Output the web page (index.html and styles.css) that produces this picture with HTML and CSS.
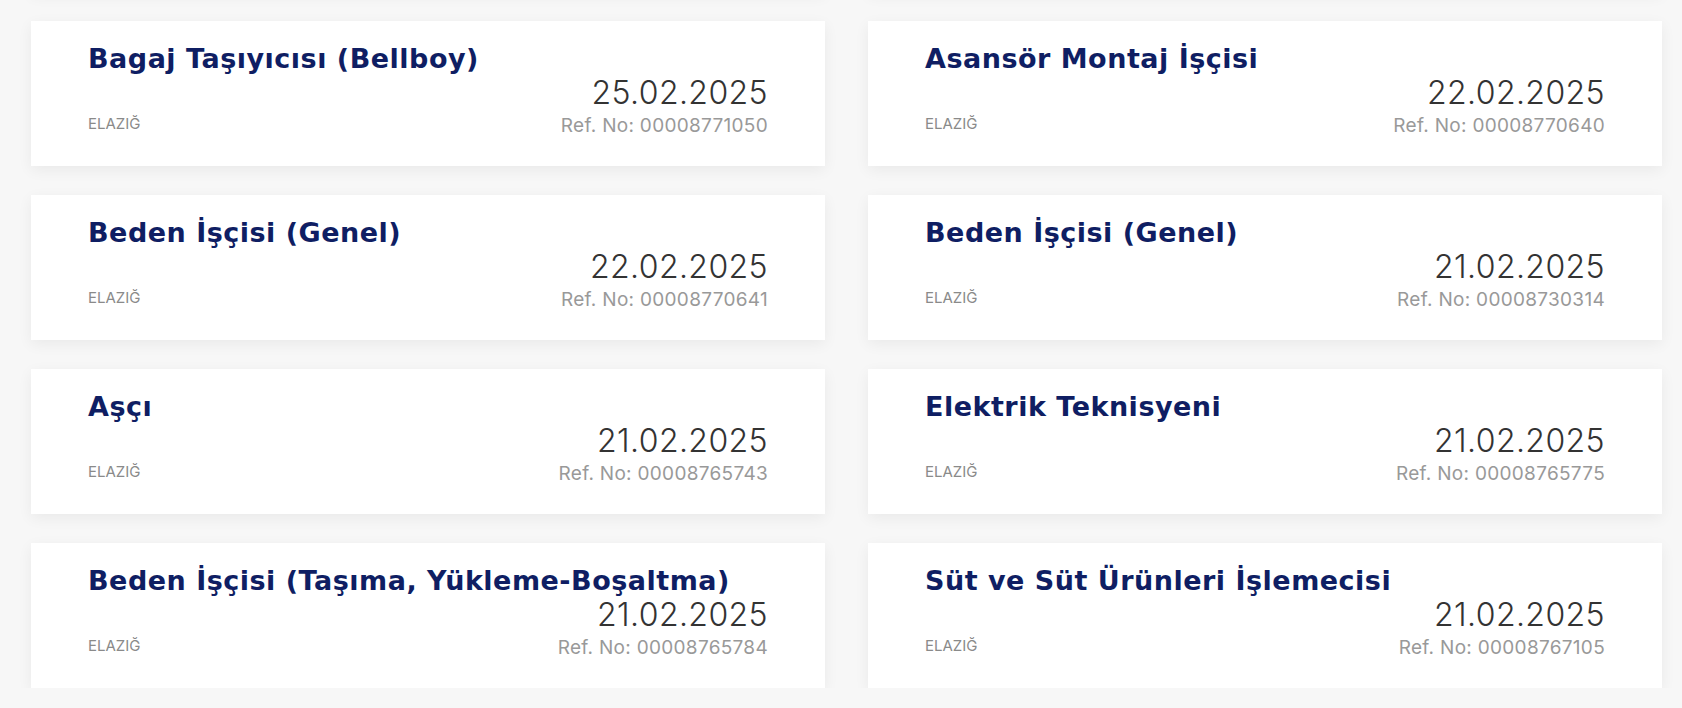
FILE: index.html
```html
<!DOCTYPE html>
<html lang="tr">
<head>
    <meta charset="UTF-8">
    <meta name="viewport" content="width=device-width, initial-scale=1.0">
    <title>İş İlanları - Elazığ</title>
    <link rel="stylesheet" href="styles.css">
</head>
<body>
    <div class="job-list">
        <!-- row scrolled above the fold, only its bottom shadow shows -->
        <div class="job-card job-card--prev" aria-hidden="true"></div>
        <div class="job-card job-card--prev" aria-hidden="true"></div>

        <a class="job-card" href="#">
            <h3 class="job-title">Bagaj Taşıyıcısı (Bellboy)</h3>
            <div class="job-info">
                <span class="job-city">ELAZIĞ</span>
                <div class="job-meta">
                    <div class="job-date">25.02.2025</div>
                    <div class="job-ref">Ref. No: 00008771050</div>
                </div>
            </div>
        </a>
        <a class="job-card" href="#">
            <h3 class="job-title">Asansör Montaj İşçisi</h3>
            <div class="job-info">
                <span class="job-city">ELAZIĞ</span>
                <div class="job-meta">
                    <div class="job-date">22.02.2025</div>
                    <div class="job-ref">Ref. No: 00008770640</div>
                </div>
            </div>
        </a>
        <a class="job-card" href="#">
            <h3 class="job-title">Beden İşçisi (Genel)</h3>
            <div class="job-info">
                <span class="job-city">ELAZIĞ</span>
                <div class="job-meta">
                    <div class="job-date">22.02.2025</div>
                    <div class="job-ref">Ref. No: 00008770641</div>
                </div>
            </div>
        </a>
        <a class="job-card" href="#">
            <h3 class="job-title">Beden İşçisi (Genel)</h3>
            <div class="job-info">
                <span class="job-city">ELAZIĞ</span>
                <div class="job-meta">
                    <div class="job-date">21.02.2025</div>
                    <div class="job-ref">Ref. No: 00008730314</div>
                </div>
            </div>
        </a>
        <a class="job-card" href="#">
            <h3 class="job-title">Aşçı</h3>
            <div class="job-info">
                <span class="job-city">ELAZIĞ</span>
                <div class="job-meta">
                    <div class="job-date">21.02.2025</div>
                    <div class="job-ref">Ref. No: 00008765743</div>
                </div>
            </div>
        </a>
        <a class="job-card" href="#">
            <h3 class="job-title">Elektrik Teknisyeni</h3>
            <div class="job-info">
                <span class="job-city">ELAZIĞ</span>
                <div class="job-meta">
                    <div class="job-date">21.02.2025</div>
                    <div class="job-ref">Ref. No: 00008765775</div>
                </div>
            </div>
        </a>
        <a class="job-card" href="#">
            <h3 class="job-title">Beden İşçisi (Taşıma, Yükleme-Boşaltma)</h3>
            <div class="job-info">
                <span class="job-city">ELAZIĞ</span>
                <div class="job-meta">
                    <div class="job-date">21.02.2025</div>
                    <div class="job-ref">Ref. No: 00008765784</div>
                </div>
            </div>
        </a>
        <a class="job-card" href="#">
            <h3 class="job-title">Süt ve Süt Ürünleri İşlemecisi</h3>
            <div class="job-info">
                <span class="job-city">ELAZIĞ</span>
                <div class="job-meta">
                    <div class="job-date">21.02.2025</div>
                    <div class="job-ref">Ref. No: 00008767105</div>
                </div>
            </div>
        </a>
    </div>
</body>
</html>
```

FILE: styles.css
```css
* {
    margin: 0;
    padding: 0;
    box-sizing: border-box;
}

body {
    font-family: Inter, 'Noto Sans', sans-serif;
    background: #f7f7f7;
    color: #333;
    overflow: hidden;
}

/* Job list grid (page is scrolled, first row sits above the fold) */
.job-list {
    display: grid;
    grid-template-columns: 1fr 1fr;
    column-gap: 43px;
    row-gap: 29px;
    padding: 0 20px 0 31px;
    margin-top: -153px;
}

.job-card {
    display: block;
    height: 145px;
    background: #fff;
    padding: 20px 57px 0 57px;
    text-decoration: none;
    box-shadow: 0 4px 14px rgba(0, 0, 0, 0.06);
}

.job-title {
    font-family: 'DejaVu Sans', Inter, sans-serif;
    font-size: 27px;
    line-height: 36px;
    font-weight: 700;
    letter-spacing: 0.5px;
    color: #0f1e63;
    white-space: nowrap;
}

.job-info {
    display: flex;
    justify-content: space-between;
    align-items: flex-end;
}

.job-city {
    font-size: 15px;
    line-height: 20px;
    color: #8a8a8a;
    margin-bottom: 4px;
}

.job-meta {
    text-align: right;
}

.job-date {
    font-size: 32px;
    line-height: 32px;
    font-weight: 300;
    color: #333;
    letter-spacing: 0.4px;
}

.job-ref {
    font-size: 19px;
    line-height: 24px;
    color: #999;
    letter-spacing: 0.3px;
    margin-top: 5px;
}
```
